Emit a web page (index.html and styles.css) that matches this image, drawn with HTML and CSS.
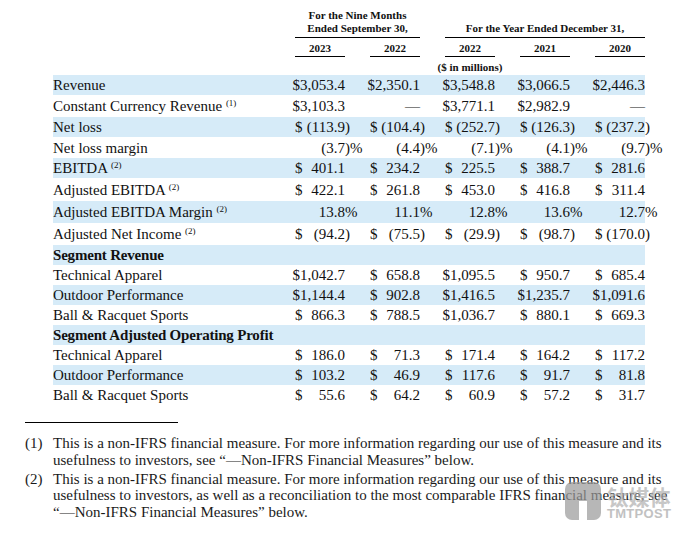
FILE: index.html
```html
<!DOCTYPE html>
<html lang="en">
<head>
<meta charset="utf-8">
<title>Financial summary</title>
<link rel="stylesheet" href="styles.css">
</head>
<body>
<div class="page">
  <div class="table">
    <div class="grid hdr">
      <div></div>
      <div class="grp grp1">For the Nine Months<br>Ended September 30,</div>
      <div class="grp grp2">For the Year Ended December 31,</div>
    </div>
    <div class="grid years">
      <div></div>
      <div class="yr">2023</div>
      <div class="yr">2022</div>
      <div class="yr">2022</div>
      <div class="yr">2021</div>
      <div class="yr">2020</div>
    </div>
    <div class="grid unit">
      <div></div><div></div><div></div>
      <div class="unit-cell"><span>($ in millions)</span></div>
      <div></div><div></div>
    </div>

    <div class="grid row band">
      <div class="lbl">Revenue</div>
      <div class="v"><span class="n">$3,053.4</span><span class="h"></span></div>
      <div class="v"><span class="n">$2,350.1</span><span class="h"></span></div>
      <div class="v"><span class="n">$3,548.8</span><span class="h"></span></div>
      <div class="v"><span class="n">$3,066.5</span><span class="h"></span></div>
      <div class="v"><span class="n">$2,446.3</span><span class="h"></span></div>
    </div>
    <div class="grid row r22">
      <div class="lbl">Constant Currency Revenue <sup class="fn">(1)</sup></div>
      <div class="v"><span class="n">$3,103.3</span><span class="h"></span></div>
      <div class="v"><span class="n">—</span><span class="h"></span></div>
      <div class="v"><span class="n">$3,771.1</span><span class="h"></span></div>
      <div class="v"><span class="n">$2,982.9</span><span class="h"></span></div>
      <div class="v"><span class="n">—</span><span class="h"></span></div>
    </div>
    <div class="grid row band">
      <div class="lbl">Net loss</div>
      <div class="v"><span class="c">$</span><span class="n">(113.9</span><span class="h">)</span></div>
      <div class="v"><span class="c">$</span><span class="n">(104.4</span><span class="h">)</span></div>
      <div class="v"><span class="c">$</span><span class="n">(252.7</span><span class="h">)</span></div>
      <div class="v"><span class="c">$</span><span class="n">(126.3</span><span class="h">)</span></div>
      <div class="v"><span class="c">$</span><span class="n">(237.2</span><span class="h">)</span></div>
    </div>
    <div class="grid row r21">
      <div class="lbl">Net loss margin</div>
      <div class="v"><span class="n">(3.7</span><span class="h">)%</span></div>
      <div class="v"><span class="n">(4.4</span><span class="h">)%</span></div>
      <div class="v"><span class="n">(7.1</span><span class="h">)%</span></div>
      <div class="v"><span class="n">(4.1</span><span class="h">)%</span></div>
      <div class="v"><span class="n">(9.7</span><span class="h">)%</span></div>
    </div>
    <div class="grid row band">
      <div class="lbl">EBITDA <sup class="fn">(2)</sup></div>
      <div class="v"><span class="c">$</span><span class="n">401.1</span><span class="h"></span></div>
      <div class="v"><span class="c">$</span><span class="n">234.2</span><span class="h"></span></div>
      <div class="v"><span class="c">$</span><span class="n">225.5</span><span class="h"></span></div>
      <div class="v"><span class="c">$</span><span class="n">388.7</span><span class="h"></span></div>
      <div class="v"><span class="c">$</span><span class="n">281.6</span><span class="h"></span></div>
    </div>
    <div class="grid row r23">
      <div class="lbl">Adjusted EBITDA <sup class="fn">(2)</sup></div>
      <div class="v"><span class="c">$</span><span class="n">422.1</span><span class="h"></span></div>
      <div class="v"><span class="c">$</span><span class="n">261.8</span><span class="h"></span></div>
      <div class="v"><span class="c">$</span><span class="n">453.0</span><span class="h"></span></div>
      <div class="v"><span class="c">$</span><span class="n">416.8</span><span class="h"></span></div>
      <div class="v"><span class="c">$</span><span class="n">311.4</span><span class="h"></span></div>
    </div>
    <div class="grid row band r22">
      <div class="lbl">Adjusted EBITDA Margin <sup class="fn">(2)</sup></div>
      <div class="v"><span class="n">13.8</span><span class="h">%</span></div>
      <div class="v"><span class="n">11.1</span><span class="h">%</span></div>
      <div class="v"><span class="n">12.8</span><span class="h">%</span></div>
      <div class="v"><span class="n">13.6</span><span class="h">%</span></div>
      <div class="v"><span class="n">12.7</span><span class="h">%</span></div>
    </div>
    <div class="grid row r22">
      <div class="lbl">Adjusted Net Income <sup class="fn">(2)</sup></div>
      <div class="v"><span class="c">$</span><span class="n">(94.2</span><span class="h">)</span></div>
      <div class="v"><span class="c">$</span><span class="n">(75.5</span><span class="h">)</span></div>
      <div class="v"><span class="c">$</span><span class="n">(29.9</span><span class="h">)</span></div>
      <div class="v"><span class="c">$</span><span class="n">(98.7</span><span class="h">)</span></div>
      <div class="v"><span class="c">$</span><span class="n">(170.0</span><span class="h">)</span></div>
    </div>

    <div class="grid row band">
      <div class="lbl sec">Segment Revenue</div>
    </div>
    <div class="grid row">
      <div class="lbl">Technical Apparel</div>
      <div class="v"><span class="n">$1,042.7</span><span class="h"></span></div>
      <div class="v"><span class="c">$</span><span class="n">658.8</span><span class="h"></span></div>
      <div class="v"><span class="n">$1,095.5</span><span class="h"></span></div>
      <div class="v"><span class="c">$</span><span class="n">950.7</span><span class="h"></span></div>
      <div class="v"><span class="c">$</span><span class="n">685.4</span><span class="h"></span></div>
    </div>
    <div class="grid row band">
      <div class="lbl">Outdoor Performance</div>
      <div class="v"><span class="n">$1,144.4</span><span class="h"></span></div>
      <div class="v"><span class="c">$</span><span class="n">902.8</span><span class="h"></span></div>
      <div class="v"><span class="n">$1,416.5</span><span class="h"></span></div>
      <div class="v"><span class="n">$1,235.7</span><span class="h"></span></div>
      <div class="v"><span class="n">$1,091.6</span><span class="h"></span></div>
    </div>
    <div class="grid row">
      <div class="lbl">Ball &amp; Racquet Sports</div>
      <div class="v"><span class="c">$</span><span class="n">866.3</span><span class="h"></span></div>
      <div class="v"><span class="c">$</span><span class="n">788.5</span><span class="h"></span></div>
      <div class="v"><span class="n">$1,036.7</span><span class="h"></span></div>
      <div class="v"><span class="c">$</span><span class="n">880.1</span><span class="h"></span></div>
      <div class="v"><span class="c">$</span><span class="n">669.3</span><span class="h"></span></div>
    </div>

    <div class="grid row band">
      <div class="lbl sec">Segment Adjusted Operating Profit</div>
    </div>
    <div class="grid row">
      <div class="lbl">Technical Apparel</div>
      <div class="v"><span class="c">$</span><span class="n">186.0</span><span class="h"></span></div>
      <div class="v"><span class="c">$</span><span class="n">71.3</span><span class="h"></span></div>
      <div class="v"><span class="c">$</span><span class="n">171.4</span><span class="h"></span></div>
      <div class="v"><span class="c">$</span><span class="n">164.2</span><span class="h"></span></div>
      <div class="v"><span class="c">$</span><span class="n">117.2</span><span class="h"></span></div>
    </div>
    <div class="grid row band">
      <div class="lbl">Outdoor Performance</div>
      <div class="v"><span class="c">$</span><span class="n">103.2</span><span class="h"></span></div>
      <div class="v"><span class="c">$</span><span class="n">46.9</span><span class="h"></span></div>
      <div class="v"><span class="c">$</span><span class="n">117.6</span><span class="h"></span></div>
      <div class="v"><span class="c">$</span><span class="n">91.7</span><span class="h"></span></div>
      <div class="v"><span class="c">$</span><span class="n">81.8</span><span class="h"></span></div>
    </div>
    <div class="grid row">
      <div class="lbl">Ball &amp; Racquet Sports</div>
      <div class="v"><span class="c">$</span><span class="n">55.6</span><span class="h"></span></div>
      <div class="v"><span class="c">$</span><span class="n">64.2</span><span class="h"></span></div>
      <div class="v"><span class="c">$</span><span class="n">60.9</span><span class="h"></span></div>
      <div class="v"><span class="c">$</span><span class="n">57.2</span><span class="h"></span></div>
      <div class="v"><span class="c">$</span><span class="n">31.7</span><span class="h"></span></div>
    </div>
  </div>

  <div class="notes">
    <div class="rule"></div>
    <div class="note">
      <span class="mk">(1)</span>
      <p>This is a non-IFRS financial measure. For more information regarding our use of this measure and its<br>usefulness to investors, see “—Non-IFRS Financial Measures” below.</p>
    </div>
    <div class="note">
      <span class="mk">(2)</span>
      <p>This is a non-IFRS financial measure. For more information regarding our use of this measure and its<br>usefulness to investors, as well as a reconciliation to the most comparable IFRS financial measure, see<br>“—Non-IFRS Financial Measures” below.</p>
    </div>
  </div>

  <div class="wm">
    <svg class="wm-icon" width="36" height="38" viewBox="0 0 36 38">
      <rect x="0" y="0" width="36" height="38" rx="7" fill="#9a9a9a"/>
      <rect x="14" y="19" width="8" height="19" fill="#ffffff"/>
    </svg>
    <div class="wm-text">
      <span class="wm-cn">钛媒体</span>
      <span class="wm-en">TMTPOST</span>
    </div>
  </div>
</div>
</body>
</html>
```

FILE: styles.css
```css
* { box-sizing: border-box; }

body {
  margin: 0;
  background: #ffffff;
  font-family: "Liberation Serif", "Times New Roman", serif;
  color: #111111;
}

.page {
  position: relative;
  width: 700px;
  height: 535px;
  overflow: hidden;
}

.table {
  padding-left: 53px;
  width: 645px;
}

.grid {
  display: grid;
  grid-template-columns: 217px repeat(5, 50px);
  column-gap: 25px;
}

/* header */
.hdr {
  padding-top: 9px;
}

.grp {
  font-weight: bold;
  font-size: 11px;
  line-height: 13px;
  text-align: center;
  white-space: nowrap;
  padding-bottom: 2px;
  border-bottom: 1px solid #000;
}

.grp1 { grid-column: 2 / 4; }
.grp2 { grid-column: 4 / 7; align-self: end; }

.years {
  margin-top: 4px;
}

.yr {
  font-weight: bold;
  font-size: 11px;
  line-height: 12px;
  text-align: center;
  padding-bottom: 2px;
  border-bottom: 1px solid #000;
}

.unit {
  margin-top: 4px;
  margin-bottom: 2px;
  height: 12px;
}

.unit-cell {
  display: flex;
  justify-content: center;
  font-weight: bold;
  font-size: 11px;
  line-height: 12px;
  white-space: nowrap;
}

/* data rows */
.row {
  height: 20px;
  font-size: 15px;
  line-height: 20px;
  align-items: center;
}

.row.r21 { height: 21px; }
.row.r22 { height: 22px; }
.row.r23 { height: 23px; }

.band {
  background: #d6ebf8;
}

.lbl {
  white-space: nowrap;
}

.sec {
  font-weight: bold;
  letter-spacing: -0.2px;
}

.fn {
  font-size: 9px;
  line-height: 0;
  vertical-align: 5px;
}

.v {
  display: flex;
  justify-content: flex-end;
  white-space: nowrap;
}

.c {
  margin-right: auto;
}

.h {
  width: 0;
  overflow: visible;
  white-space: nowrap;
}

/* footnotes */
.notes {
  padding-left: 25px;
}

.rule {
  width: 153px;
  margin-top: 17px;
  border-top: 1px solid #000;
}

.note {
  display: grid;
  grid-template-columns: 28px 1fr;
  font-size: 15px;
  line-height: 16.5px;
  margin-top: 2.5px;
  color: #1a1a1a;
}

.notes .rule + .note {
  margin-top: 12px;
}

.note p {
  margin: 0;
  white-space: nowrap;
}

/* watermark */
.wm {
  position: absolute;
  left: 565px;
  top: 482px;
  display: flex;
  align-items: flex-start;
  gap: 6px;
  opacity: 0.7;
}

.wm-text {
  display: flex;
  flex-direction: column;
  align-items: center;
  padding-top: 4px;
}

.wm-cn {
  font-family: "Noto Sans CJK SC", sans-serif;
  font-size: 21px;
  line-height: 21px;
  color: #b0b0b0;
  font-weight: bold;
}

.wm-en {
  font-family: "Liberation Sans", Arial, sans-serif;
  font-weight: bold;
  font-size: 13px;
  line-height: 13px;
  color: #a8a8a8;
  letter-spacing: 0.3px;
}
```
